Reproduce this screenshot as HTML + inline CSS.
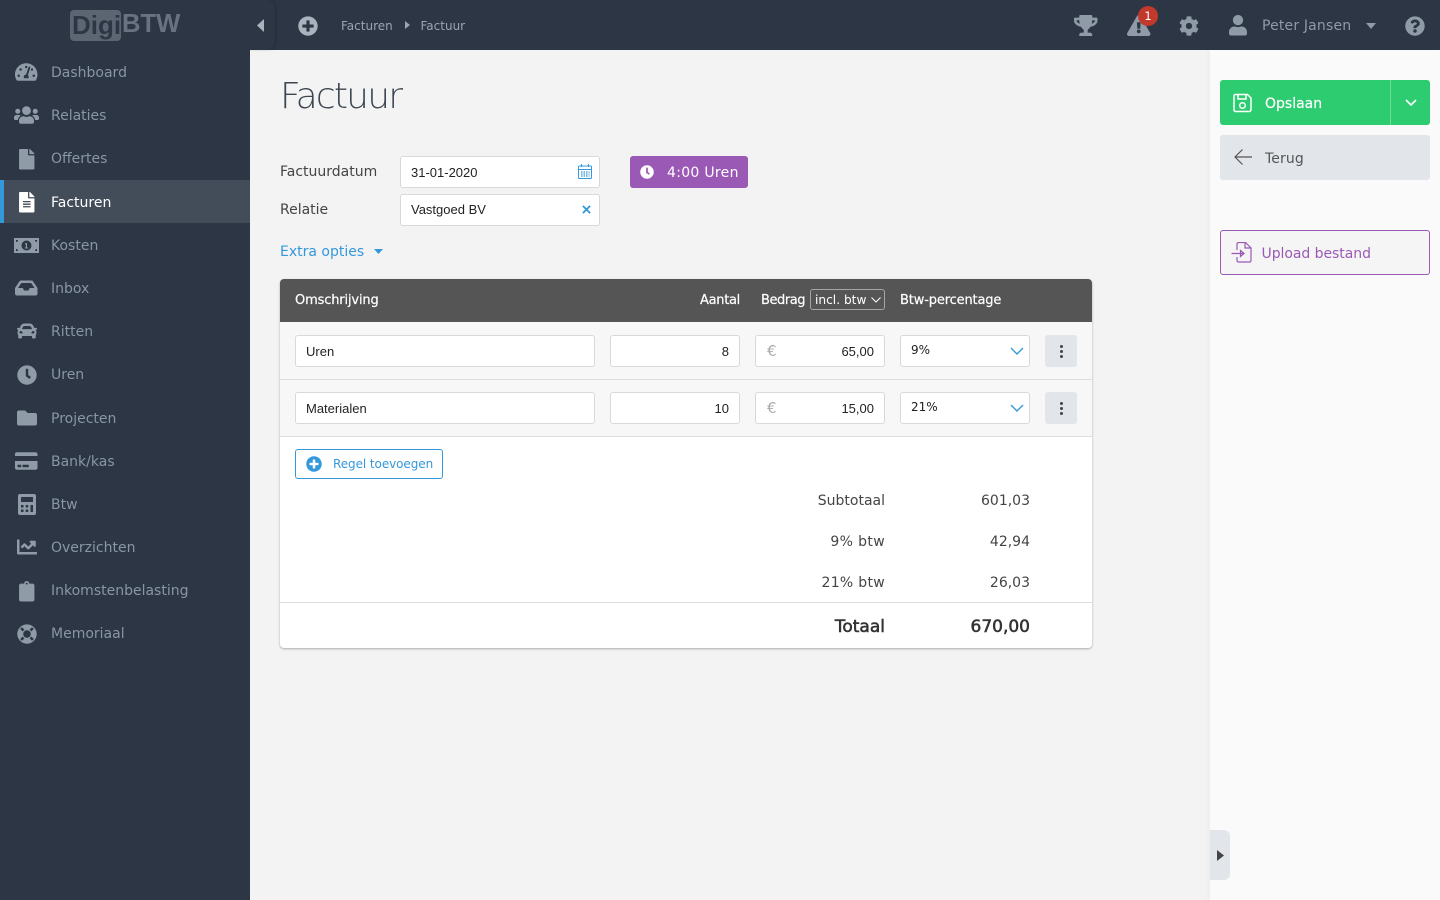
<!DOCTYPE html>
<html lang="nl">
<head>
<meta charset="utf-8">
<title>Factuur</title>
<style>
html,body{margin:0;padding:0;width:1440px;height:900px;overflow:hidden;background:#f3f3f3}
body{position:relative;font-family:"DejaVu Sans","Liberation Sans",sans-serif;font-size:14px;color:#444}
.a{position:absolute;white-space:nowrap}
svg{position:absolute;display:block}
#side{position:absolute;left:0;top:0;width:250px;height:900px;background:#2c3644}
#top{position:absolute;left:250px;top:0;width:1190px;height:50px;background:#2c3644}
#tog{position:absolute;left:250px;top:0;width:25px;height:50px;background:#2c3644;border-radius:0 8px 8px 0;box-shadow:1px 0 2px rgba(0,0,0,.18)}
.n{position:absolute;left:51px;color:#8896a5;font-size:14px;line-height:20px;white-space:nowrap}
.ic{fill:#8f9ba7}
#right{position:absolute;left:1210px;top:50px;width:230px;height:850px;background:#fafafa;box-shadow:-3px 0 4px rgba(0,0,0,.025)}
.inp{position:absolute;box-sizing:border-box;background:#fff;border:1px solid #d7d9dc;border-radius:3px;height:32px;font-family:"Liberation Sans",sans-serif;font-size:13px;color:#222;line-height:31px;padding:0 10px;white-space:nowrap}
.lab{position:absolute;left:280px;font-size:14px;color:#444;line-height:20px}
#card{position:absolute;left:280px;top:279px;width:812px;height:369px;background:#fff;border-radius:4px;box-shadow:0 1px 2px rgba(0,0,0,.3)}
.th{position:absolute;top:286px;line-height:30px;color:#fff;font-size:13px;white-space:nowrap;letter-spacing:-.15px;-webkit-text-stroke:.2px #fff}
.kb{position:absolute;left:1045px;width:32px;height:32px;background:#e2e5ea;border-radius:3px}
.kb i{position:absolute;left:14.5px;width:3px;height:3px;border-radius:50%;background:#444}
.t{position:absolute;text-align:right;font-size:14px;line-height:20px;color:#444;white-space:nowrap}
.tb{font-size:17px;line-height:24px;color:#333;-webkit-text-stroke:.55px #333}
</style>
</head>
<body>

<div id="side"></div>
<div id="top"></div>
<div id="tog"></div>

<!-- logo -->
<div class="a" style="left:70px;top:10px;width:51px;height:31px;background:#5b6672;border-radius:4px"></div>
<div class="a" style="left:72px;top:8.500px;font:bold 26px/32px 'Liberation Sans',sans-serif;color:#2c3644">Digi</div>
<div class="a" style="left:122px;top:8px;font:bold 25.600px/32px 'Liberation Sans',sans-serif;color:#687280">BTW</div>

<!-- active row -->
<div class="a" style="left:0;top:180px;width:250px;height:43px;background:#434d5a"></div>
<div class="a" style="left:0;top:180px;width:4px;height:43px;background:#3498db"></div>

<!-- nav -->
<svg class="ic" style="left:15.2px;top:62px" width="22.5" height="20" viewBox="0 0 576 512"><path d="M288 32C128.94 32 0 160.94 0 320c0 52.8 14.25 102.26 39.06 144.8 5.61 9.62 16.3 15.2 27.44 15.2h443c11.14 0 21.83-5.58 27.44-15.2C561.75 422.26 576 372.8 576 320c0-159.06-128.94-288-288-288zm0 64c14.71 0 26.58 10.13 30.32 23.65-1.11 2.26-2.64 4.23-3.45 6.67l-9.22 27.67c-5.13 3.49-10.97 6.01-17.64 6.01-17.67 0-32-14.33-32-32S270.33 96 288 96zM96 384c-17.67 0-32-14.33-32-32s14.33-32 32-32 32 14.33 32 32-14.33 32-32 32zm48-160c-17.67 0-32-14.33-32-32s14.33-32 32-32 32 14.33 32 32-14.33 32-32 32zm246.77-72.41l-61.33 184C343.13 347.33 352 364.54 352 384c0 11.72-3.38 22.55-8.88 32H232.88c-5.5-9.45-8.88-20.28-8.88-32 0-33.94 26.5-61.43 59.9-63.59l61.34-184.01c4.17-12.56 17.73-19.45 30.36-15.17 12.57 4.19 19.35 17.79 15.17 30.36zm14.66 57.2l15.52-46.55c3.47-1.29 7.13-2.23 11.05-2.23 17.67 0 32 14.33 32 32s-14.33 32-32 32c-11.38-.01-20.89-6.28-26.57-15.22zM480 384c-17.67 0-32-14.33-32-32s14.33-32 32-32 32 14.33 32 32-14.33 32-32 32z"/></svg>
<div class="n" style="top:63px">Dashboard</div>

<svg class="ic" style="left:14px;top:105px" width="25" height="20" viewBox="0 0 640 512"><path d="M96 224c35.3 0 64-28.7 64-64s-28.7-64-64-64-64 28.7-64 64 28.7 64 64 64zm448 0c35.3 0 64-28.7 64-64s-28.7-64-64-64-64 28.7-64 64 28.7 64 64 64zm32 32h-64c-17.6 0-33.5 7.1-45.1 18.6 40.3 22.1 68.9 62 75.1 109.4h66c17.7 0 32-14.3 32-32v-32c0-35.3-28.7-64-64-64zm-256 0c61.9 0 112-50.1 112-112S381.9 32 320 32 208 82.1 208 144s50.1 112 112 112zm76.8 32h-8.3c-20.8 10-43.9 16-68.5 16s-47.6-6-68.5-16h-8.3C179.6 288 128 339.6 128 403.2V432c0 26.5 21.5 48 48 48h288c26.5 0 48-21.5 48-48v-28.8c0-63.6-51.6-115.2-115.2-115.2zm-223.7-13.4C161.5 263.1 145.6 256 128 256H64c-35.3 0-64 28.7-64 64v32c0 17.7 14.3 32 32 32h65.9c6.3-47.4 34.9-87.3 75.2-109.4z"/></svg>
<div class="n" style="top:106px">Relaties</div>

<svg class="ic" style="left:19px;top:149px" width="15.5" height="20.5" viewBox="0 0 384 512"><path d="M224 136V0H24C10.7 0 0 10.7 0 24v464c0 13.3 10.7 24 24 24h336c13.3 0 24-10.7 24-24V160H248c-13.2 0-24-10.8-24-24zm160-14.1v6.1H256V0h6.1c6.4 0 12.5 2.5 17 7l97.9 98c4.5 4.5 7 10.6 7 16.9z"/></svg>
<div class="n" style="top:149px">Offertes</div>

<svg style="left:19px;top:192px;fill:#fff" width="15.5" height="20.5" viewBox="0 0 384 512"><path d="M224 136V0H24C10.7 0 0 10.7 0 24v464c0 13.3 10.7 24 24 24h336c13.3 0 24-10.7 24-24V160H248c-13.2 0-24-10.8-24-24zm64 236c0 6.6-5.4 12-12 12H108c-6.6 0-12-5.4-12-12v-8c0-6.6 5.4-12 12-12h168c6.6 0 12 5.4 12 12v8zm0-64c0 6.6-5.4 12-12 12H108c-6.6 0-12-5.4-12-12v-8c0-6.6 5.4-12 12-12h168c6.6 0 12 5.4 12 12v8zm0-72v8c0 6.6-5.4 12-12 12H108c-6.6 0-12-5.4-12-12v-8c0-6.6 5.4-12 12-12h168c6.6 0 12 5.4 12 12zm96-114.1v6.1H256V0h6.1c6.4 0 12.5 2.5 17 7l97.9 98c4.5 4.5 7 10.6 7 16.9z"/></svg>
<div class="n" style="top:193px;color:#fff">Facturen</div>

<svg class="ic" style="left:14px;top:238px" width="25" height="15" viewBox="0 0 25 15"><path fill-rule="evenodd" d="M0 0h25v15H0zM2 2v2a2 2 0 0 0 2-2zM21 2a2 2 0 0 0 2 2V2zM2 11v2h2a2 2 0 0 0-2-2zM23 11a2 2 0 0 0-2 2h2zM12.500 2.500a5 5 0 1 0 0 10a5 5 0 0 0 0-10z"/><path d="M11.500 5h1.500v4.500h1v1h-3.200v-1h1V6.500h-.8z"/></svg>
<div class="n" style="top:236px">Kosten</div>

<svg class="ic" style="left:15.200px;top:278px" width="22.500" height="20" viewBox="0 0 576 512"><path d="M567.938 243.908L462.25 85.374A48.003 48.003 0 0 0 422.311 64H153.689a48 48 0 0 0-39.938 21.374L8.062 243.908A47.994 47.994 0 0 0 0 270.533V400c0 26.51 21.49 48 48 48h480c26.51 0 48-21.49 48-48V270.533a47.994 47.994 0 0 0-8.062-26.625zM162.252 128h251.497l85.333 128H376l-32 64H232l-32-64H76.918l85.334-128z"/></svg>
<div class="n" style="top:279px">Inbox</div>

<svg class="ic" style="left:16.500px;top:321px" width="20" height="20" viewBox="0 0 512 512"><path d="M499.99 176h-59.87l-16.64-41.6C406.38 91.63 365.57 64 319.5 64h-127c-46.06 0-86.88 27.63-103.99 70.4L71.87 176H12.01C4.2 176-1.53 183.34.37 190.91l6 24C7.7 220.25 12.5 224 18.01 224h20.07C24.65 235.73 16 252.78 16 272v48c0 16.12 6.16 30.67 16 41.93V416c0 17.67 14.33 32 32 32h32c17.67 0 32-14.33 32-32v-32h256v32c0 17.67 14.33 32 32 32h32c17.67 0 32-14.33 32-32v-54.07c9.84-11.25 16-25.8 16-41.93v-48c0-19.22-8.65-36.27-22.07-48H494c5.51 0 10.31-3.75 11.64-9.09l6-24c1.89-7.57-3.84-14.91-11.65-14.91zm-352.06-17.83c7.29-18.22 24.94-30.17 44.57-30.17h127c19.63 0 37.28 11.95 44.57 30.17L384 208H128l19.93-49.83zM96 319.8c-19.2 0-32-12.76-32-31.9S76.8 256 96 256s48 28.71 48 47.85-28.8 15.95-48 15.95zm320 0c-19.2 0-48 3.19-48-15.95S396.8 256 416 256s32 12.76 32 31.9-12.8 31.9-32 31.900z"/></svg>
<div class="n" style="top:322px">Ritten</div>

<svg class="ic" style="left:16.500px;top:365px" width="20" height="20" viewBox="0 0 512 512"><path d="M256,8C119,8,8,119,8,256S119,504,256,504,504,393,504,256,393,8,256,8Zm92.49,313h0l-20,25a16,16,0,0,1-22.49,2.5h0l-67-49.72a40,40,0,0,1-15-31.23V112a16,16,0,0,1,16-16h32a16,16,0,0,1,16,16V256l58,42.5A16,16,0,0,1,348.49,321Z"/></svg>
<div class="n" style="top:365px">Uren</div>

<svg class="ic" style="left:16.500px;top:408px" width="20" height="20" viewBox="0 0 512 512"><path d="M464 128H272l-64-64H48C21.49 64 0 85.49 0 112v288c0 26.51 21.49 48 48 48h416c26.51 0 48-21.49 48-48V176c0-26.51-21.49-48-48-48z"/></svg>
<div class="n" style="top:409px">Projecten</div>

<svg class="ic" style="left:15.200px;top:451px" width="22.500" height="20" viewBox="0 0 576 512"><path d="M0 432c0 26.500 21.500 48 48 48h480c26.500 0 48-21.500 48-48V256H0v176zm192-68c0-6.600 5.400-12 12-12h136c6.600 0 12 5.400 12 12v40c0 6.600-5.400 12-12 12H204c-6.600 0-12-5.400-12-12v-40zm-128 0c0-6.600 5.400-12 12-12h72c6.600 0 12 5.400 12 12v40c0 6.600-5.400 12-12 12H76c-6.600 0-12-5.400-12-12v-40zM576 80v48H0V80c0-26.500 21.500-48 48-48h480c26.500 0 48 21.500 48 48z"/></svg>
<div class="n" style="top:452px">Bank/kas</div>

<svg class="ic" style="left:17.500px;top:494px" width="18" height="21" viewBox="0 0 18 21"><path fill-rule="evenodd" d="M2 0h14a2 2 0 0 1 2 2v17a2 2 0 0 1-2 2H2a2 2 0 0 1-2-2V2a2 2 0 0 1 2-2zM3 3v5h12V3zM3 11v2.500h2.500V11zM7.700 11v2.500h2.500V11zM12.500 11v7H15v-7zM3 15.500V18h2.500v-2.500zM7.700 15.500V18h2.500v-2.500z"/></svg>
<div class="n" style="top:495px">Btw</div>

<svg class="ic" style="left:16.500px;top:537px" width="20" height="20" viewBox="0 0 512 512"><path d="M496 384H64V80c0-8.840-7.160-16-16-16H16C7.160 64 0 71.160 0 80v336c0 17.670 14.330 32 32 32h464c8.840 0 16-7.160 16-16v-32c0-8.840-7.160-16-16-16zM464 96H345.940c-21.380 0-32.090 25.850-16.970 40.970l32.400 32.400L288 242.750l-73.370-73.370c-12.500-12.500-32.760-12.500-45.250 0l-68.690 68.690c-6.250 6.250-6.250 16.380 0 22.630l22.620 22.620c6.250 6.250 16.380 6.250 22.630 0L192 237.250l73.370 73.370c12.500 12.500 32.760 12.500 45.250 0l96-96 32.400 32.400c15.120 15.120 40.970 4.410 40.970-16.970V112c.01-8.840-7.150-16-15.990-16z"/></svg>
<div class="n" style="top:538px">Overzichten</div>

<svg class="ic" style="left:19px;top:581px" width="15.500" height="20.500" viewBox="0 0 384 512"><path d="M336 64h-80c0-35.300-28.700-64-64-64s-64 28.700-64 64H48C21.500 64 0 85.500 0 112v352c0 26.500 21.500 48 48 48h288c26.500 0 48-21.500 48-48V112c0-26.500-21.500-48-48-48zM192 40c13.300 0 24 10.700 24 24s-10.700 24-24 24-24-10.700-24-24 10.700-24 24-24z"/></svg>
<div class="n" style="top:581px">Inkomstenbelasting</div>

<svg class="ic" style="left:16.500px;top:624px" width="20" height="20" viewBox="0 0 512 512"><path d="M256 8C119.033 8 8 119.033 8 256s111.033 248 248 248 248-111.033 248-248S392.967 8 256 8zm173.696 119.559l-63.399 63.399c-10.987-18.559-26.670-34.252-45.255-45.255l63.399-63.399a218.396 218.396 0 0 1 45.255 45.255zM256 352c-53.019 0-96-42.981-96-96s42.981-96 96-96 96 42.981 96 96-42.981 96-96 96zM127.559 82.304l63.399 63.399c-18.559 10.987-34.252 26.670-45.255 45.255l-63.399-63.399a218.372 218.372 0 0 1 45.255-45.255zM82.304 384.441l63.399-63.399c10.987 18.559 26.670 34.252 45.255 45.255l-63.399 63.399a218.396 218.396 0 0 1-45.255-45.255zm302.137 45.255l-63.399-63.399c18.559-10.987 34.252-26.670 45.255-45.255l63.399 63.399a218.403 218.403 0 0 1-45.255 45.255z"/></svg>
<div class="n" style="top:624px">Memoriaal</div>

<!-- top bar -->
<svg style="left:257px;top:19px;fill:#a9b2bc" width="7" height="13" viewBox="0 0 7 13"><path d="M7 0v13L0 6.500z"/></svg>
<svg style="left:298px;top:15.500px;fill:#a9b3bd" width="20" height="20" viewBox="0 0 512 512"><path d="M256 8C119 8 8 119 8 256s111 248 248 248 248-111 248-248S393 8 256 8zm144 276c0 6.600-5.400 12-12 12h-92v92c0 6.600-5.400 12-12 12h-56c-6.600 0-12-5.400-12-12v-92h-92c-6.600 0-12-5.400-12-12v-56c0-6.600 5.400-12 12-12h92v-92c0-6.600 5.400-12 12-12h56c6.600 0 12 5.400 12 12v92h92c6.600 0 12 5.400 12 12v56z"/></svg>
<div class="a" style="left:341px;top:16px;font-size:12px;line-height:20px;color:#9aa5b1">Facturen</div>
<svg style="left:405px;top:21px;fill:#9aa5b1" width="5" height="8" viewBox="0 0 5 8"><path d="M0 0l5 4-5 4z"/></svg>
<div class="a" style="left:420.500px;top:16px;font-size:12px;line-height:20px;color:#9aa5b1">Factuur</div>

<svg class="ic" style="left:1074px;top:15px" width="23.500" height="21" viewBox="0 0 576 512"><path d="M552 64H448V24c0-13.300-10.700-24-24-24H152c-13.300 0-24 10.700-24 24v40H24C10.700 64 0 74.700 0 88v56c0 35.700 22.500 72.400 61.900 100.700 31.500 22.700 69.800 37.100 110 41.700C203.300 338.500 240 360 240 360v72h-48c-35.300 0-64 20.700-64 56v12c0 6.600 5.400 12 12 12h296c6.600 0 12-5.400 12-12v-12c0-35.300-28.700-56-64-56h-48v-72s36.700-21.500 68.100-73.600c40.300-4.600 78.700-19 110-41.700 39.300-28.300 61.900-65 61.900-100.700V88c0-13.300-10.700-24-24-24zM99.300 192.800C74.900 175.200 64 155.600 64 144v-16h64.200c1 32.600 5.800 61.200 12.800 86.200-15.100-5.200-29.200-12.400-41.700-21.400zM512 144c0 16.100-17.700 36.100-35.300 48.800-12.500 9-26.700 16.200-41.800 21.400 7-25 11.800-53.600 12.800-86.200H512v16z"/></svg>
<svg class="ic" style="left:1127px;top:15px" width="23.500" height="21" viewBox="0 0 576 512"><path d="M569.517 440.013C587.975 472.007 564.806 512 527.940 512H48.054c-36.937 0-59.999-40.055-41.577-71.987L246.423 23.985c18.467-32.009 64.720-31.951 83.154 0l239.940 416.028zM288 354c-25.405 0-46 20.595-46 46s20.595 46 46 46 46-20.595 46-46-20.595-46-46-46zm-43.673-165.346l7.418 136c.347 6.364 5.609 11.346 11.982 11.346h48.546c6.373 0 11.635-4.982 11.982-11.346l7.418-136c.375-6.874-5.098-12.654-11.982-12.654h-63.383c-6.884 0-12.356 5.780-11.981 12.654z"/></svg>
<div class="a" style="left:1138px;top:6px;width:20px;height:20px;border-radius:50%;background:#c0392b;color:#fff;font-size:11.500px;line-height:20px;text-align:center">1</div>
<svg class="ic" style="left:1179px;top:15.500px" width="20" height="20" viewBox="0 0 512 512"><path d="M487.400 315.700l-42.600-24.600c4.300-23.200 4.300-47 0-70.200l42.600-24.600c4.900-2.800 7.100-8.600 5.500-14-11.100-35.600-30-67.800-54.700-94.600-3.800-4.100-10-5.100-14.800-2.300L380.800 110c-17.900-15.400-38.500-27.300-60.800-35.100V25.800c0-5.600-3.900-10.500-9.400-11.700-36.700-8.200-74.300-7.800-109.200 0-5.500 1.200-9.400 6.100-9.400 11.700V75c-22.200 7.900-42.800 19.800-60.800 35.100L88.700 85.500c-4.900-2.800-11-1.900-14.800 2.300-24.700 26.700-43.600 58.900-54.700 94.600-1.700 5.400.6 11.200 5.500 14L67.300 221c-4.300 23.200-4.300 47 0 70.200l-42.600 24.600c-4.900 2.800-7.100 8.600-5.500 14 11.100 35.600 30 67.800 54.700 94.600 3.800 4.100 10 5.100 14.800 2.300l42.600-24.600c17.900 15.400 38.500 27.300 60.800 35.100v49.200c0 5.600 3.900 10.500 9.400 11.700 36.700 8.200 74.300 7.800 109.200 0 5.500-1.200 9.400-6.100 9.400-11.700v-49.200c22.200-7.900 42.800-19.800 60.800-35.100l42.600 24.600c4.900 2.800 11 1.900 14.800-2.300 24.700-26.700 43.600-58.900 54.700-94.600 1.500-5.500-.7-11.300-5.600-14.100zM256 336c-44.100 0-80-35.900-80-80s35.900-80 80-80 80 35.900 80 80-35.900 80-80 80z"/></svg>
<svg class="ic" style="left:1229px;top:15px" width="18" height="20.500" viewBox="0 0 448 512"><path d="M224 256c70.700 0 128-57.300 128-128S294.700 0 224 0 96 57.300 96 128s57.300 128 128 128zm89.600 32h-16.700c-22.200 10.200-46.900 16-72.900 16s-50.600-5.800-72.900-16h-16.700C60.200 288 0 348.200 0 422.400V464c0 26.500 21.500 48 48 48h352c26.500 0 48-21.500 48-48v-41.600c0-74.200-60.200-134.400-134.400-134.400z"/></svg>
<div class="a" style="left:1262px;top:16px;font-size:14px;line-height:20px;color:#8f9ba7;letter-spacing:.17px">Peter Jansen</div>
<svg class="ic" style="left:1366px;top:23px" width="10" height="6" viewBox="0 0 10 6"><path d="M0 0h10L5 6z"/></svg>
<svg class="ic" style="left:1405px;top:15.500px" width="20" height="20" viewBox="0 0 512 512"><path d="M504 256c0 136.997-111.043 248-248 248S8 392.997 8 256C8 119.083 119.043 8 256 8s248 111.083 248 248zM262.655 90c-54.497 0-89.255 22.957-116.549 63.758-3.536 5.286-2.353 12.415 2.715 16.258l34.699 26.310c5.205 3.947 12.621 3.008 16.665-2.122 17.864-22.658 30.113-35.797 57.303-35.797 20.429 0 45.698 13.148 45.698 32.958 0 14.976-12.363 22.667-32.534 33.976C247.128 238.528 216 254.941 216 296v4c0 6.627 5.373 12 12 12h56c6.627 0 12-5.373 12-12v-1.333c0-28.462 83.186-29.647 83.186-106.667 0-58.002-60.165-102-116.531-102zM256 338c-25.365 0-46 20.635-46 46 0 25.364 20.635 46 46 46s46-20.636 46-46c0-25.365-20.635-46-46-46z"/></svg>

<!-- title -->
<div class="a" style="left:280px;top:73px;font-family:'DejaVu Sans',sans-serif;font-weight:200;font-size:36px;line-height:48px;color:#3c4652;letter-spacing:-1.800px">Factuur</div>

<!-- form -->
<div class="lab" style="top:162px">Factuurdatum</div>
<div class="lab" style="top:200px">Relatie</div>
<div class="inp" style="left:400px;top:156px;width:200px">31-01-2020</div>
<svg style="left:577px;top:163px" width="16" height="17" viewBox="0 0 16 17" fill="none" stroke="#3498db"><rect x="1.500" y="3" width="13" height="12.500" rx="1"/><path d="M1.500 6.500h13M4.500 1v3M11.500 1v3"/><path stroke-width="1.300" stroke-dasharray="1.500 1" d="M4 9h8.500M4 11h8.500M4 13h8.500"/></svg>
<div class="inp" style="left:400px;top:194px;width:200px;line-height:30px">Vastgoed BV</div>
<svg style="left:582px;top:205px" width="9" height="9" viewBox="0 0 10 10" stroke="#3498db" stroke-width="2"><path d="M1 1l8 8M9 1L1 9"/></svg>

<div class="a" style="left:630px;top:156px;width:118px;height:32px;background:#9b59b6;border-radius:3px"></div>
<svg style="left:640px;top:165px;fill:#fff" width="14" height="14" viewBox="0 0 512 512"><path d="M256,8C119,8,8,119,8,256S119,504,256,504,504,393,504,256,393,8,256,8Zm92.490,313h0l-20,25a16,16,0,0,1-22.490,2.500h0l-67-49.720a40,40,0,0,1-15-31.230V112a16,16,0,0,1,16-16h32a16,16,0,0,1,16,16V256l58,42.500A16,16,0,0,1,348.490,321Z"/></svg>
<div class="a" style="left:667px;top:163px;font-size:14px;line-height:20px;color:#fff;letter-spacing:.3px">4:00 Uren</div>

<div class="a" style="left:280px;top:242px;font-size:14px;line-height:20px;color:#3498db">Extra opties</div>
<svg style="left:374px;top:249px;fill:#3498db" width="9" height="5" viewBox="0 0 9 5"><path d="M0 0h9L4.500 5z"/></svg>

<!-- table card -->
<div id="card"></div>
<div class="a" style="left:280px;top:279px;width:812px;height:43px;background:#555;border-radius:4px 4px 0 0"></div>
<div class="a" style="left:280px;top:322px;width:812px;height:57px;background:#f7f7f7;border-bottom:1px solid #ddd"></div>
<div class="a" style="left:280px;top:380px;width:812px;height:56px;background:#f7f7f7;border-bottom:1px solid #ddd"></div>

<div class="th" style="left:295px">Omschrijving</div>
<div class="th" style="left:700px;letter-spacing:-.3px">Aantal</div>
<div class="th" style="left:761px;letter-spacing:-.45px">Bedrag</div>
<div class="a" style="left:810px;top:289px;width:73px;height:19px;border:1px solid #a5a5a5;border-radius:3px"></div>
<div class="a" style="left:815px;top:290px;color:#fff;font-size:12.200px;line-height:20px">incl. btw</div>
<svg style="left:871px;top:297px" width="10" height="6" viewBox="0 0 10 6" fill="none" stroke="#fff"><path d="M.5.500L5 5 9.500.500"/></svg>
<div class="th" style="left:900px">Btw-percentage</div>

<div class="inp" style="left:295px;top:335px;width:300px">Uren</div>
<div class="inp" style="left:610px;top:335px;width:130px;text-align:right">8</div>
<div class="inp" style="left:755px;top:335px;width:130px;text-align:right">65,00</div>
<div class="a" style="left:767px;top:342px;font:15px/18px 'DejaVu Sans',sans-serif;color:#aaa">€</div>
<div class="inp" style="left:900px;top:335px;width:130px;font-family:'DejaVu Sans',sans-serif;font-size:12px;line-height:28px">9%</div>
<svg style="left:1010px;top:347px" width="14" height="8" viewBox="0 0 14 8" fill="none" stroke="#3498db" stroke-width="1.400"><path d="M1 1l6 6 6-6"/></svg>
<div class="kb" style="top:335px"><i style="top:10px"></i><i style="top:15px"></i><i style="top:20px"></i></div>

<div class="inp" style="left:295px;top:392px;width:300px">Materialen</div>
<div class="inp" style="left:610px;top:392px;width:130px;text-align:right">10</div>
<div class="inp" style="left:755px;top:392px;width:130px;text-align:right">15,00</div>
<div class="a" style="left:767px;top:399px;font:15px/18px 'DejaVu Sans',sans-serif;color:#aaa">€</div>
<div class="inp" style="left:900px;top:392px;width:130px;font-family:'DejaVu Sans',sans-serif;font-size:12px;line-height:28px">21%</div>
<svg style="left:1010px;top:404px" width="14" height="8" viewBox="0 0 14 8" fill="none" stroke="#3498db" stroke-width="1.400"><path d="M1 1l6 6 6-6"/></svg>
<div class="kb" style="top:392px"><i style="top:10px"></i><i style="top:15px"></i><i style="top:20px"></i></div>

<div class="a" style="left:295px;top:449px;width:146px;height:28px;border:1px solid #3498db;border-radius:3px;background:#fff"></div>
<svg style="left:306px;top:456px;fill:#3498db" width="16" height="16" viewBox="0 0 512 512"><path d="M256 8C119 8 8 119 8 256s111 248 248 248 248-111 248-248S393 8 256 8zm144 276c0 6.600-5.400 12-12 12h-92v92c0 6.600-5.400 12-12 12h-56c-6.600 0-12-5.400-12-12v-92h-92c-6.600 0-12-5.400-12-12v-56c0-6.600 5.400-12 12-12h92v-92c0-6.600 5.400-12 12-12h56c6.600 0 12 5.400 12 12v92h92c6.600 0 12 5.400 12 12v56z"/></svg>
<div class="a" style="left:333px;top:454px;font-size:12px;line-height:20px;color:#3498db;letter-spacing:-.07px">Regel toevoegen</div>

<div class="t" style="right:555px;top:491px">Subtotaal</div>
<div class="t" style="right:410px;top:491px">601,03</div>
<div class="t" style="right:555px;top:532px;letter-spacing:.35px">9% btw</div>
<div class="t" style="right:410px;top:532px">42,94</div>
<div class="t" style="right:555px;top:573px;letter-spacing:.3px">21% btw</div>
<div class="t" style="right:410px;top:573px">26,03</div>
<div class="a" style="left:280px;top:602px;width:812px;height:1px;background:#ddd"></div>
<div class="t tb" style="right:555px;top:614.500px">Totaal</div>
<div class="t tb" style="right:410px;top:614.500px">670,00</div>

<!-- right panel -->
<div id="right"></div>
<div class="a" style="left:1220px;top:80px;width:210px;height:45px;background:#2ecc71;border-radius:3px"></div>
<div class="a" style="left:1390px;top:80px;width:1px;height:45px;background:#6bdc9b"></div>
<svg style="left:1233px;top:93px" width="20" height="20" viewBox="0 0 20 20" fill="none" stroke="#fff" stroke-width="1.500"><path d="M2.500 1.500h12l3.500 3.500v11.500a2 2 0 0 1-2 2H2.500a1.500 1.500 0 0 1-1.500-1.500V3a1.500 1.500 0 0 1 1.500-1.500z"/><path d="M5 1.500v4.500h8V1.500"/><circle cx="9.500" cy="12.500" r="2.800"/></svg>
<div class="a" style="left:1265px;top:94px;font-size:14px;line-height:20px;color:#fff;-webkit-text-stroke:.2px #fff">Opslaan</div>
<svg style="left:1405px;top:99px" width="12" height="8" viewBox="0 0 12 8" fill="none" stroke="#fff" stroke-width="1.600"><path d="M1 1l5 5 5-5"/></svg>

<div class="a" style="left:1220px;top:135px;width:210px;height:45px;background:#e2e5ea;border-radius:3px"></div>
<svg style="left:1233px;top:148px" width="20" height="18" viewBox="0 0 20 18" fill="none" stroke="#555" stroke-width="1.200"><path d="M19 9H2M9.500 1.500L2 9l7.500 7.500"/></svg>
<div class="a" style="left:1265px;top:149px;font-size:14px;line-height:20px;color:#555;letter-spacing:.1px">Terug</div>

<div class="a" style="left:1220px;top:230px;width:208px;height:43px;border:1px solid #9b59b6;border-radius:3px;background:#f5f5f5"></div>
<svg style="left:1231px;top:242px" width="21" height="21" viewBox="0 0 21 21" fill="none" stroke="#9b59b6" stroke-width="1.200"><path d="M6 8V2a1.500 1.500 0 0 1 1.500-1.500h7L20 6v12.500a1.500 1.500 0 0 1-1.500 1.500h-11A1.500 1.500 0 0 1 6 18.500V15"/><path d="M14 .500V6h6M.500 11.500h12M9.500 8.500l3.500 3-3.500 3z"/></svg>
<div class="a" style="left:1261.500px;top:244px;font-size:14px;line-height:20px;color:#9b59b6;letter-spacing:-.05px">Upload bestand</div>

<div class="a" style="left:1210px;top:830px;width:20px;height:50px;background:#e2e5ea;border-radius:0 6px 6px 0"></div>
<svg style="left:1217px;top:850px;fill:#444" width="7" height="11" viewBox="0 0 7 11"><path d="M0 0l7 5.500L0 11z"/></svg>

</body>
</html>
